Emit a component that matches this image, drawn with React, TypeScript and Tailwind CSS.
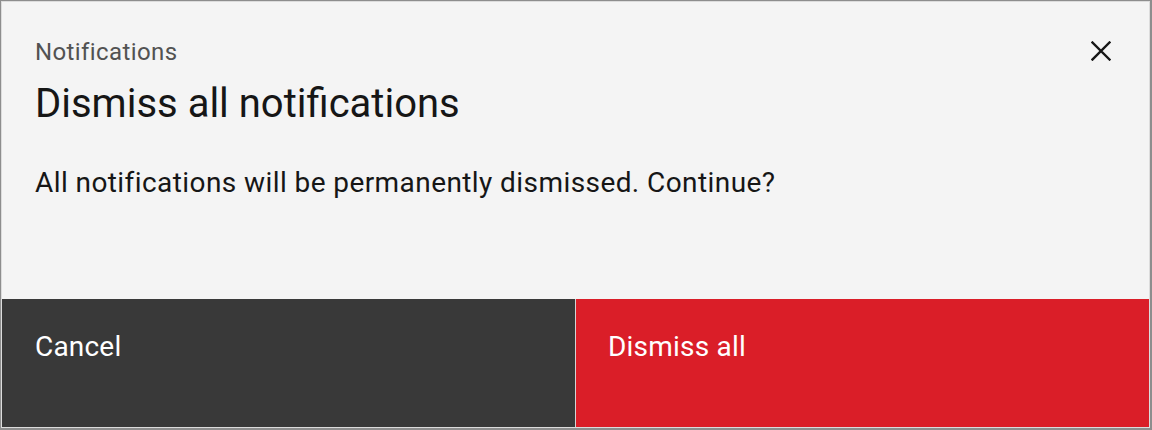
import React from 'react';

const CloseIcon = () => (
  <svg width="20" height="20" viewBox="0 0 20 20" fill="none" stroke="#161616" strokeWidth="2.4" strokeLinecap="square">
    <path d="M1.5 1.5L18.5 18.5M18.5 1.5L1.5 18.5" />
  </svg>
);

export default function App() {
  return (
    <div className="h-[430px] w-[1152px] border border-r-2 border-b-2 border-[#8d8d8d] bg-[#dcdcdc] p-px font-['Roboto',sans-serif]">
      <div className="flex h-full flex-col bg-[#f4f4f4]">
        {/* Header + body */}
        <div className="relative flex-1 pl-[33px] pr-8 pt-[34px]">
          <p className="text-[24px] leading-[32px] tracking-[0.4px] text-[#525252]">Notifications</p>
          <h2 className="mt-2 text-[40px] leading-[56px] text-[#161616]">Dismiss all notifications</h2>
          <p className="mt-[31px] text-[28px] leading-[40px] tracking-[0.42px] text-[#161616]">
            All notifications will be permanently dismissed. Continue?
          </p>
          <button className="absolute right-[38px] top-[39px] flex h-5 w-5 items-center justify-center" aria-label="Close">
            <CloseIcon />
          </button>
        </div>

        {/* Footer buttons */}
        <div className="grid h-[128px] grid-cols-2 gap-px bg-[#d4d4d4]">
          <button className="flex items-start bg-[#393939] pl-[33px] pr-8 pt-[28px] text-left text-[28px] leading-[40px] tracking-[0.2px] text-white">
            Cancel
          </button>
          <button className="flex items-start bg-[#da1e28] px-8 pt-[28px] text-left text-[28px] leading-[40px] tracking-[0.2px] text-white">
            Dismiss all
          </button>
        </div>
      </div>
    </div>
  );
}
